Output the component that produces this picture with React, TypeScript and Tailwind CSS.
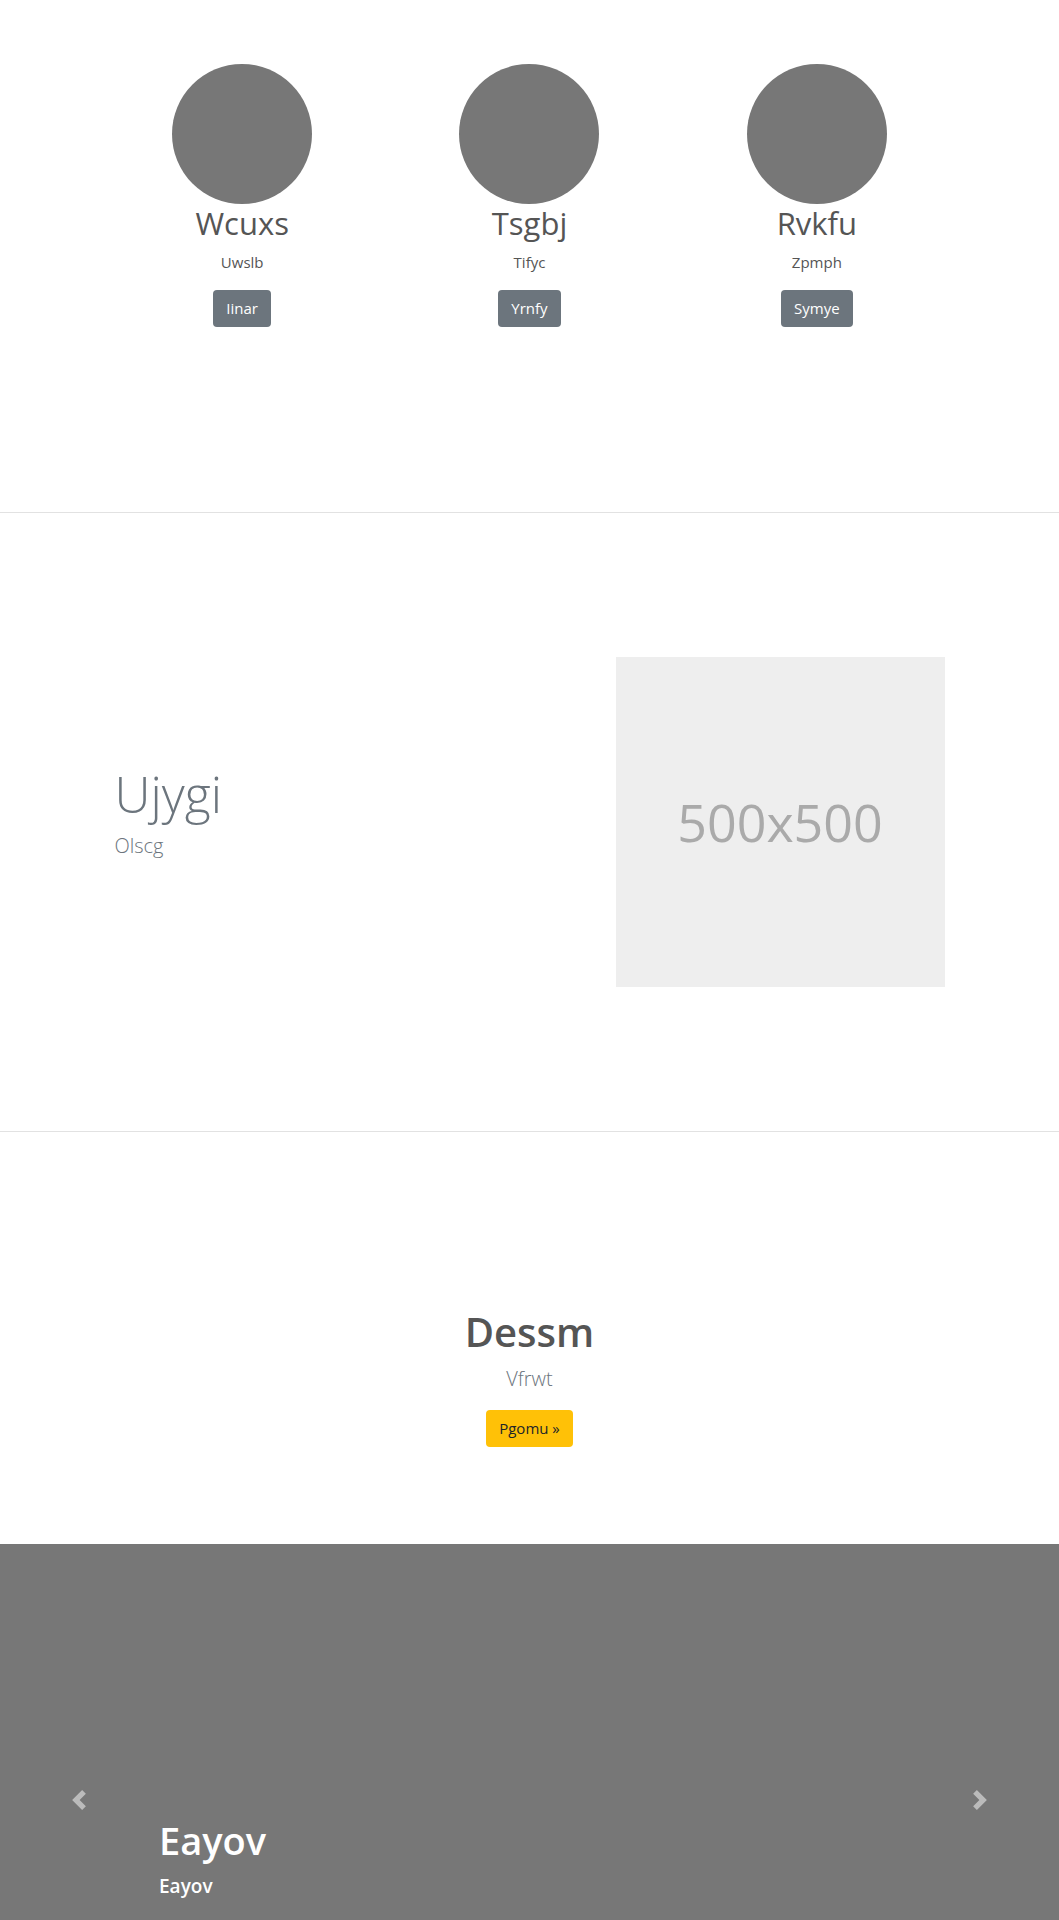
const team = [
  { name: "Wcuxs", role: "Uwslb", action: "Iinar" },
  { name: "Tsgbj", role: "Tifyc", action: "Yrnfy" },
  { name: "Rvkfu", role: "Zpmph", action: "Symye" },
];

function Chevron({ dir }: { dir: "left" | "right" }) {
  // bootstrap style carousel arrow, 8x8 viewbox
  return (
    <svg viewBox="0 0 8 8" className="w-5 h-5" fill="#fff">
      {dir === "left" ? (
        <path d="M5.25 0l-4 4 4 4 1.5-1.5-2.5-2.5 2.5-2.5-1.5-1.5z" />
      ) : (
        <path d="M2.75 0l-1.5 1.5 2.5 2.5-2.5 2.5 1.5 1.5 4-4-4-4z" />
      )}
    </svg>
  );
}

export default function App() {
  return (
    <div className="bg-white font-['Open_Sans',sans-serif] text-[#212529]">
      {/* team */}
      <section className="h-[513px] border-b border-[#e2e2e2]">
        <div className="w-[862px] mx-auto grid grid-cols-3 pt-[64px]">
          {team.map((p) => (
            <div key={p.name} className="flex flex-col items-center">
              <div className="w-[140px] h-[140px] rounded-full bg-[#777777]" />
              <h2 className="text-[31px] leading-[38px] text-[#555555]">{p.name}</h2>
              <p className="mt-[9px] text-[15px] leading-[22px] text-[#555555]">{p.role}</p>
              <button className="mt-[17px] h-[37px] px-[13px] rounded-[4px] bg-[#6c757d] text-white text-[15px]">
                {p.action}
              </button>
            </div>
          ))}
        </div>
      </section>

      {/* feature */}
      <section className="h-[619px] border-b border-[#e2e2e2]">
        <div className="w-[862px] mx-auto h-full flex items-center">
          <div className="flex-1 pl-[16px] pb-[22px]">
            <h1 className="text-[50px] leading-[60px] font-light text-[#6c757d]">Ujygi</h1>
            <p className="mt-[10px] text-[20px] leading-[24px] font-light text-[#6c757d]">Olscg</p>
          </div>
          <div className="w-[329px] h-[330px] mr-[16px] bg-[#eeeeee] flex items-center justify-center">
            <span className="text-[52px] text-[#aaaaaa]">500x500</span>
          </div>
        </div>
      </section>

      {/* call to action */}
      <section className="h-[412px] pt-[176px] flex flex-col items-center">
        <h1 className="text-[40px] leading-[48px] font-semibold text-[#555555]">Dessm</h1>
        <p className="mt-[10px] text-[20px] leading-[26px] font-light text-[#6c757d]">Vfrwt</p>
        <button className="mt-[18px] h-[37px] px-[13px] rounded-[4px] bg-[#ffc107] text-[#212529] text-[15px]">
          Pgomu »
        </button>
      </section>

      {/* carousel */}
      <section className="relative h-[512px] bg-[#777777] text-white">
        <button className="absolute left-0 top-0 bottom-0 w-[15%] flex items-center justify-center opacity-50">
          <Chevron dir="left" />
        </button>
        <button className="absolute right-0 top-0 bottom-0 w-[15%] flex items-center justify-center opacity-50">
          <Chevron dir="right" />
        </button>
        <div className="pl-[159px] pt-[272px]">
          <h3 className="text-[38px] leading-[48px] font-semibold">Eayov</h3>
          <p className="mt-[10px] text-[19px] leading-[24px] font-semibold">Eayov</p>
        </div>
      </section>
    </div>
  );
}
